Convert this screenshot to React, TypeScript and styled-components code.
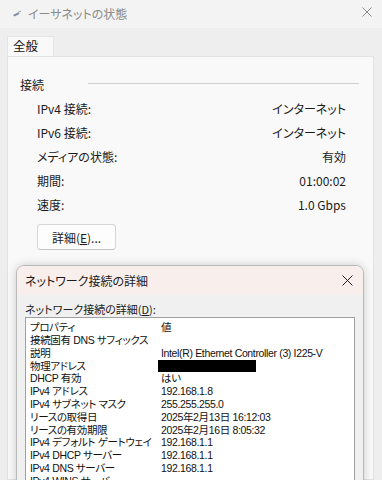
import React from 'react';
import styled, { createGlobalStyle } from 'styled-components';

const GlobalStyle = createGlobalStyle`
    html, body {
        margin: 0;
        padding: 0;
        width: 382px;
        height: 480px;
        overflow: hidden;
        background: #eeeeee;
    }
    * {
        box-sizing: border-box;
    }
`;

const UI_FONT = `"Noto Sans CJK JP", "Noto Sans", sans-serif`;
const LIST_FONT = `"Liberation Sans", "Noto Sans CJK JP", sans-serif`;

const statusRows = [
    { label: 'IPv4 接続:', value: 'インターネット' },
    { label: 'IPv6 接続:', value: 'インターネット' },
    { label: 'メディアの状態:', value: '有効' },
    { label: '期間:', value: '01:00:02' },
    { label: '速度:', value: '1.0 Gbps' },
];

const detailRows: { prop: string; value: string; masked?: boolean }[] = [
    { prop: '接続固有 DNS サフィックス', value: '' },
    { prop: '説明', value: 'Intel(R) Ethernet Controller (3) I225-V' },
    { prop: '物理アドレス', value: '', masked: true },
    { prop: 'DHCP 有効', value: 'はい' },
    { prop: 'IPv4 アドレス', value: '192.168.1.8' },
    { prop: 'IPv4 サブネット マスク', value: '255.255.255.0' },
    { prop: 'リースの取得日', value: '2025年2月13日 16:12:03' },
    { prop: 'リースの有効期限', value: '2025年2月16日 8:05:32' },
    { prop: 'IPv4 デフォルト ゲートウェイ', value: '192.168.1.1' },
    { prop: 'IPv4 DHCP サーバー', value: '192.168.1.1' },
    { prop: 'IPv4 DNS サーバー', value: '192.168.1.1' },
    { prop: 'IPv4 WINS サーバー', value: '' },
];

const CloseIcon = ({ color, size }: { color: string; size: number }) => (
    <svg width={size} height={size} viewBox="0 0 10 10">
        <path d="M0.5 0.5 L9.5 9.5 M9.5 0.5 L0.5 9.5" stroke={color} strokeWidth="1" fill="none" vectorEffect="non-scaling-stroke" />
    </svg>
);

const NetIcon = () => (
    <svg width="10" height="8" viewBox="0 0 10 8">
        <path d="M1 6 L6 3.5 L7.5 5 L2.5 7.5 Z" fill="#7d8da0" />
        <path d="M6 3.5 L9 2" stroke="#8a9aad" strokeWidth="1" />
    </svg>
);

export default function App() {
    return (
        <Screen>
            <GlobalStyle />
            <TitleBar>
                <TitleLeft>
                    <NetIcon />
                    <TitleText>イーサネットの状態</TitleText>
                </TitleLeft>
                <CloseBox><CloseIcon color="#8c8c8c" size={10} /></CloseBox>
            </TitleBar>
            <TabStrip>
                <Tab>全般</Tab>
            </TabStrip>
            <Panel>
                <GroupHeader>
                    <GroupLabel>接続</GroupLabel>
                    <GroupLine />
                </GroupHeader>
                <StatusList>
                    {statusRows.map((r) => (
                        <StatusRow key={r.label}>
                            <span>{r.label}</span>
                            <span>{r.value}</span>
                        </StatusRow>
                    ))}
                </StatusList>
                <PushButton>詳細(<u>E</u>)...</PushButton>
            </Panel>

            <Dialog>
                <DialogTitle>
                    <span>ネットワーク接続の詳細</span>
                    <CloseBox><CloseIcon color="#202020" size={11} /></CloseBox>
                </DialogTitle>
                <DialogBody>
                    <FieldLabel>ネットワーク接続の詳細(<u>D</u>):</FieldLabel>
                    <ListBox>
                        <ListHeader>
                            <span>プロパティ</span>
                            <span>値</span>
                        </ListHeader>
                        {detailRows.map((r) => (
                            <ListRow key={r.prop}>
                                <span>{r.prop}</span>
                                {r.masked ? <Mask /> : <span>{r.value}</span>}
                            </ListRow>
                        ))}
                    </ListBox>
                </DialogBody>
            </Dialog>
        </Screen>
    );
}

const Screen = styled.div`
    position: relative;
    width: 382px;
    height: 480px;
    overflow: hidden;
    background: #eeeeee;
    font-family: ${UI_FONT};
    font-feature-settings: "palt";
    color: #1b1b1b;
    display: flex;
    flex-direction: column;
`;

const TitleBar = styled.div`
    height: 28px;
    flex-shrink: 0;
    background: #f3f3f3;
    display: flex;
    align-items: center;
    justify-content: space-between;
    padding: 0 10px 5px 12px;
`;

const TitleLeft = styled.div`
    display: flex;
    align-items: center;
    gap: 6px;
    padding-top: 3px;
`;

const TitleText = styled.span`
    font-size: 12px;
    color: #8a8a8a;
`;

const CloseBox = styled.div`
    display: flex;
    align-items: center;
    justify-content: center;
`;

const TabStrip = styled.div`
    display: flex;
    flex-shrink: 0;
    padding: 8px 0 0 7px;
    background: #eeeeee;
`;

const Tab = styled.div`
    width: 47px;
    height: 20px;
    background: #f9f9f9;
    border: 1px solid #e4e4e4;
    border-bottom: none;
    font-size: 12.5px;
    line-height: 18px;
    padding-left: 5px;
    color: #111;
`;

const Panel = styled.div`
    flex: 1;
    margin: 0 8px 0 7px;
    background: #f9f9f9;
    border: 1px solid #e2e2e2;
    padding: 19px 14px 0 12px;
`;

const GroupHeader = styled.div`
    display: flex;
    align-items: center;
    height: 16px;
`;

const GroupLabel = styled.span`
    width: 68px;
    font-size: 12px;
    line-height: 16px;
    margin-top: 1px;
`;

const GroupLine = styled.div`
    flex: 1;
    height: 1px;
    background: #cfcfcf;
    margin-top: -2px;
`;

const StatusList = styled.div`
    margin-top: 4px;
    padding: 0 13px 0 17px;
`;

const StatusRow = styled.div`
    display: flex;
    justify-content: space-between;
    align-items: center;
    height: 24px;
    font-size: 12px;
`;

const PushButton = styled.button`
    margin: 8px 0 0 17px;
    width: 79px;
    height: 26px;
    background: #fdfdfd;
    border: 1px solid #d6d6d6;
    border-bottom-color: #c4c4c4;
    border-radius: 4px;
    font-family: ${UI_FONT};
    font-feature-settings: "palt";
    font-size: 12px;
    color: #1b1b1b;
    padding: 0;
`;

const Dialog = styled.div`
    position: absolute;
    left: 16px;
    top: 265px;
    width: 348px;
    height: 240px;
    background: #f0f0f0;
    border: 1px solid #b9b9b9;
    border-radius: 8px 8px 0 0;
    box-shadow: 0 0 10px rgba(0, 0, 0, 0.18);
    overflow: hidden;
`;

const DialogTitle = styled.div`
    height: 29px;
    background: #f8efed;
    display: flex;
    align-items: center;
    justify-content: space-between;
    padding: 0 10px 0 8px;
    font-size: 12px;
    color: #1b1b1b;
`;

const DialogBody = styled.div`
    padding: 7px 0 0 8px;
`;

const FieldLabel = styled.div`
    font-size: 11px;
    line-height: 14px;
    color: #1b1b1b;
`;

const ListBox = styled.div`
    margin-top: 1px;
    width: 330px;
    height: 200px;
    background: #ffffff;
    border: 1px solid #9f9f9f;
    font-family: ${LIST_FONT};
    font-feature-settings: "palt";
    font-size: 10.5px;
    letter-spacing: -0.35px;
    color: #111;
`;

const ListHeader = styled.div`
    display: grid;
    grid-template-columns: 131px 1fr;
    height: 16px;
    align-items: center;
    padding-left: 4px;
`;

const ListRow = styled.div`
    display: grid;
    grid-template-columns: 131px 1fr;
    height: 12.8px;
    line-height: 12.8px;
    padding-left: 4px;
    white-space: nowrap;
`;

const Mask = styled.div`
    width: 98px;
    height: 12.8px;
    margin-left: -3px;
    background: #000;
`;
